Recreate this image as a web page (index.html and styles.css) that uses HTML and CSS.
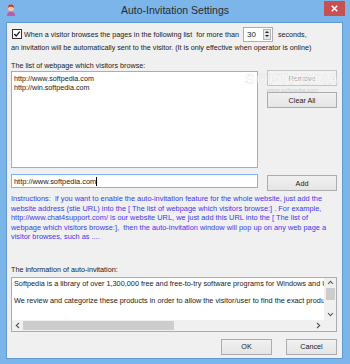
FILE: index.html
```html
<!DOCTYPE html>
<html>
<head>
<meta charset="utf-8">
<link rel="stylesheet" href="styles.css">
</head>
<body>
<div class="window">
  <div class="titlebar">
    <svg class="app-icon" width="10" height="12" viewBox="0 0 10 12">
      <path d="M1 12 Q1 7.5 5 7.5 Q9 7.5 9 12 Z" fill="#c05aa8"/>
      <circle cx="5" cy="4.2" r="3" fill="#f4c7a0"/>
      <path d="M2 4 Q2 0.6 5 0.6 Q8 0.6 8 4 Q6.5 2.6 5 2.8 Q3.5 2.6 2 4 Z" fill="#c0392b"/>
    </svg>
    <div class="title">Auto-Invitation Settings</div>
    <div class="close">
      <svg width="7" height="7" viewBox="0 0 7 7"><path d="M0.8 0.8 L6.2 6.2 M6.2 0.8 L0.8 6.2" stroke="#fff" stroke-width="1.6"/></svg>
    </div>
  </div>
  <div class="client">
    <div class="opt-row">
      <span class="check"><svg width="9" height="9" viewBox="0 0 9 9"><path d="M1.5 4.5 L3.6 6.8 L7.6 1.8" stroke="#111" stroke-width="1.4" fill="none"/></svg></span>
      <span class="opt-text">When a visitor browses the pages in the following list&nbsp; for more than</span>
      <span class="spin"><span class="spin-val">30</span><span class="spin-btns"><span class="up"></span><span class="down"></span></span></span>
      <span class="opt-sec">seconds,</span>
    </div>
    <div class="line2">an invitation will be automatically sent to the visitor. (It is only effective when operator is online)</div>
    <div class="label label-list">The list of webpage which visitors browse:</div>
    <div class="list-row">
      <div class="listbox">
        <div>http://www.softpedia.com</div>
        <div>http://win.softpedia.com</div>
      </div>
      <div class="side">
        <div class="btn disabled">Remove</div>
        <div class="btn">Clear All</div>
      </div>
      <div class="watermark"><span class="wm-big">SOFTPEDIA</span><span class="wm-small">www.softpedia.com</span></div>
    </div>
    <div class="add-row">
      <div class="input">http://www.softpedia.com<span class="caret"></span></div>
      <div class="btn add">Add</div>
    </div>
    <p class="instructions">Instructions:&nbsp; if you want to enable the auto-invitation feature for the whole website, just add the<br>website address (stie URL) into the [ The list of webpage which visitors browse:] . For example,<br>http://www.chat4support.com/ is our website URL, we just add this URL into the [ The list of<br>webpage which visitors browse:],&nbsp; then the auto-invitation window will pop up on any web page a<br>visitor browses, such as ....</p>
    <div class="label label-info">The information of auto-invitation:</div>
    <div class="infobox">
      <div class="info-main">
        <div class="info-text">
          <div>Softpedia is a library of over 1,300,000 free and free-to-try software programs for Windows and Unix/Linux</div>
          <div>&nbsp;</div>
          <div>We review and categorize these products in order to allow the visitor/user to find the exact product they need</div>
        </div>
        <div class="vscroll">
          <span class="arrow">
            <svg width="7" height="5" viewBox="0 0 7 5"><path d="M1 4 L3.5 1.3 L6 4" stroke="#555" stroke-width="1.1" fill="none"/></svg>
          </span>
          <span class="vthumb"></span>
          <span class="vtrack"></span>
          <span class="arrow">
            <svg width="7" height="5" viewBox="0 0 7 5"><path d="M1 1 L3.5 3.7 L6 1" stroke="#555" stroke-width="1.1" fill="none"/></svg>
          </span>
        </div>
      </div>
      <div class="hscroll-row">
        <div class="hscroll">
          <span class="harrow"><svg width="5" height="7" viewBox="0 0 5 7"><path d="M4 1 L1.3 3.5 L4 6" stroke="#555" stroke-width="1.1" fill="none"/></svg></span>
          <span class="hthumb"></span>
          <span class="htrack"></span>
          <span class="harrow"><svg width="5" height="7" viewBox="0 0 5 7"><path d="M1 1 L3.7 3.5 L1 6" stroke="#555" stroke-width="1.1" fill="none"/></svg></span>
        </div>
        <div class="corner"></div>
      </div>
    </div>
    <div class="footer">
      <div class="btn ok">OK</div>
      <div class="btn cancel">Cancel</div>
    </div>
  </div>
</div>
</body>
</html>
```

FILE: styles.css
```css
html, body {
  margin: 0;
  padding: 0;
}
body {
  font-family: "Liberation Sans", Arial, sans-serif;
  font-size: 7.2px;
  color: #1a1a1a;
}
.window {
  width: 350px;
  height: 364px;
  background: #7cb5ea;
  display: flex;
  flex-direction: column;
  box-sizing: border-box;
}
.titlebar {
  height: 22px;
  position: relative;
  display: flex;
  align-items: center;
  justify-content: center;
  flex: none;
}
.app-icon {
  position: absolute;
  left: 6px;
  top: 4px;
}
.title {
  font-size: 10.5px;
  color: #2a2a2a;
  margin-top: -2px;
}
.close {
  position: absolute;
  right: 5px;
  top: 1px;
  width: 21px;
  height: 15px;
  background: #c75050;
  display: flex;
  align-items: center;
  justify-content: center;
}
.client {
  flex: 1;
  margin: 0 7px 5px 6px;
  background: #f0f0f0;
  border: 1px solid #5f9ad4;
  padding: 2px 5px 0 4px;
  display: flex;
  flex-direction: column;
  position: relative;
}
.opt-row {
  display: flex;
  align-items: center;
  height: 16px;
  margin-top: 1px;
}
.check {
  width: 8px;
  height: 8px;
  border: 1px solid #333;
  background: #fff;
  margin-left: 1px;
  margin-right: 2px;
  display: flex;
}
.check svg {
  width: 8px;
  height: 8px;
}
.opt-text {
  white-space: pre;
}
.spin {
  margin-left: 4px;
  width: 28px;
  height: 13px;
  border: 1px solid #abadb3;
  background: #fff;
  display: flex;
  align-items: center;
  justify-content: space-between;
}
.spin-val {
  padding-left: 3px;
  font-size: 8px;
}
.spin-btns {
  width: 8px;
  height: 11px;
  margin-right: 1px;
  background: #e6e6e6;
  border: 1px solid #b5b5b5;
  box-sizing: border-box;
  display: flex;
  flex-direction: column;
  align-items: center;
  justify-content: space-around;
}
.up {
  width: 0;
  height: 0;
  border-left: 2px solid transparent;
  border-right: 2px solid transparent;
  border-bottom: 2px solid #222;
}
.down {
  width: 0;
  height: 0;
  border-left: 2px solid transparent;
  border-right: 2px solid transparent;
  border-top: 2px solid #222;
}
.opt-sec {
  margin-left: 5px;
}
.line2 {
  height: 10px;
  line-height: 10px;
  margin-top: 1px;
  white-space: nowrap;
}
.label {
  height: 10px;
  line-height: 10px;
  white-space: nowrap;
}
.label-list {
  margin-top: 8px;
}
.list-row {
  display: flex;
  margin-top: 0;
  position: relative;
}
.listbox {
  width: 247px;
  height: 97px;
  background: #fff;
  border: 1px solid #acacac;
  padding: 3px 2px;
  box-sizing: border-box;
  line-height: 8.5px;
}
.side {
  flex: 1;
  display: flex;
  flex-direction: column;
  align-items: flex-end;
  gap: 6px;
  margin-top: -1px;
}
.btn {
  width: 68px;
  height: 14px;
  border: 1px solid #acacac;
  background: linear-gradient(#f0f0f0, #e5e5e5);
  display: flex;
  align-items: center;
  justify-content: center;
  color: #1a1a1a;
}
.btn.disabled {
  color: #a0a0a0;
  border-color: #c4c4c4;
  background: #f4f4f4;
}
.watermark {
  position: absolute;
  left: 234px;
  top: -1px;
  display: flex;
  flex-direction: column;
  align-items: center;
  pointer-events: none;
}
.wm-big {
  font-size: 15px;
  letter-spacing: 1px;
  font-weight: bold;
  color: rgba(255, 255, 255, 0.5);
  -webkit-text-stroke: 0.4px rgba(170, 170, 170, 0.4);
}
.wm-small {
  font-size: 6px;
  color: rgba(150, 150, 150, 0.45);
}
.add-row {
  display: flex;
  justify-content: space-between;
  align-items: flex-start;
  margin-top: 6px;
}
.input {
  width: 247px;
  height: 14px;
  box-sizing: border-box;
  border: 1px solid #7eb4ea;
  background: #fff;
  padding-left: 2px;
  display: flex;
  align-items: center;
  font-size: 7.4px;
}
.caret {
  width: 1px;
  height: 9px;
  background: #000;
}
.btn.add {
  margin-top: 1px;
}
.instructions {
  margin: 3px 0 0 0;
  color: #3a3af0;
  font-size: 7.4px;
  line-height: 9.5px;
  white-space: nowrap;
}
.label-info {
  margin-top: 23px;
}
.infobox {
  margin-top: 2px;
  height: 55px;
  box-sizing: border-box;
  border: 1px solid #acacac;
  background: #fff;
  display: flex;
  flex-direction: column;
}
.info-main {
  flex: 1;
  display: flex;
  min-height: 0;
}
.info-text {
  flex: 1;
  overflow: hidden;
  white-space: nowrap;
  padding: 2px 0 0 2px;
  line-height: 8.6px;
  font-size: 7.3px;
}
.vscroll {
  width: 12px;
  background: #f0f0f0;
  display: flex;
  flex-direction: column;
  align-items: center;
}
.arrow {
  height: 10px;
  display: flex;
  align-items: center;
  justify-content: center;
}
.vthumb {
  width: 9px;
  height: 12px;
  background: #cdcdcd;
}
.vtrack {
  flex: 1;
}
.hscroll-row {
  display: flex;
  height: 11px;
}
.hscroll {
  flex: 1;
  display: flex;
  align-items: center;
  background: #f0f0f0;
}
.harrow {
  width: 11px;
  height: 11px;
  display: flex;
  align-items: center;
  justify-content: center;
}
.hthumb {
  width: 151px;
  height: 9px;
  background: #cdcdcd;
}
.htrack {
  flex: 1;
}
.corner {
  width: 12px;
  background: #f0f0f0;
}
.footer {
  display: flex;
  justify-content: flex-end;
  gap: 14px;
  margin-top: 7px;
}
.btn.ok, .btn.cancel {
  width: 49px;
  height: 14px;
}
```
